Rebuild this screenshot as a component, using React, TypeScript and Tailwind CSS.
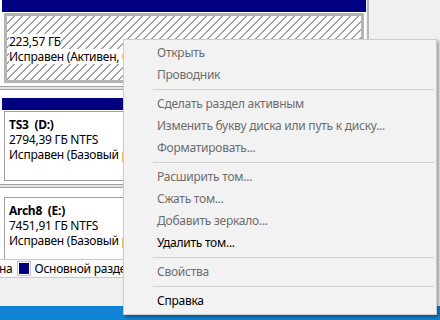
import React from 'react';

// Disk Management volume strip with the partition context menu open over it.

type Item = { label: string; enabled?: boolean } | 'sep';

const MENU: Item[] = [
  { label: 'Открыть' },
  { label: 'Проводник' },
  'sep',
  { label: 'Сделать раздел активным' },
  { label: 'Изменить букву диска или путь к диску...' },
  { label: 'Форматировать...' },
  'sep',
  { label: 'Расширить том...' },
  { label: 'Сжать том...' },
  { label: 'Добавить зеркало...' },
  { label: 'Удалить том...', enabled: true },
  'sep',
  { label: 'Свойства' },
  'sep',
  { label: 'Справка', enabled: true },
];

function DiskGap() {
  return (
    <div className="flex h-[14px] flex-col">
      <div className="h-[2px]" />
      <div className="h-[1px] bg-[#a0a0a0]" />
      <div className="h-[2px] bg-[#e3e3e3]" />
      <div className="h-[1px] bg-[#a0a0a0]" />
      <div className="flex-1 bg-white" />
    </div>
  );
}

function Partition({ lines, selected, clip }: { lines: React.ReactNode[]; selected?: boolean; clip?: boolean }) {
  return (
    <div className={clip ? 'flex flex-1 flex-col overflow-hidden pl-[2px]' : 'flex flex-col pl-[2px]'}>
      <div className="h-[12px] bg-[#000080]" />
      <div className={clip ? 'flex-1 px-[2px] pt-[1px]' : 'px-[2px] py-[1px]'}>
        <div
          className={
            selected
              ? 'h-[70px] border-[3px] border-[#b4b4b4] bg-[repeating-linear-gradient(135deg,#fff_0px,#fff_4.4px,#a4a4a4_4.4px,#a4a4a4_5.66px)] pl-[2px] pt-[3px]'
              : 'h-[70px] border border-[#a0a0a0] bg-white pl-[4px] pt-[5px]'
          }
        >
          {lines.map((l, i) => (
            <div key={i} className="h-[15px] leading-[15px]">
              {l && <span className="inline-block max-w-[114px] overflow-hidden whitespace-nowrap bg-white align-top">{l}</span>}
            </div>
          ))}
        </div>
      </div>
    </div>
  );
}

export default function App() {
  return (
    <div
      className="relative h-[320px] w-[440px] overflow-hidden bg-[#f0f0f0] text-[12px] tracking-[-0.25px] text-black"
      style={{ fontFamily: '"Noto Sans", "Open Sans", sans-serif' }}
    >
      <div className="flex h-full flex-col">
        <div className="flex h-[278px]">
          <div className="flex w-[366px] flex-col bg-white">
            <Partition selected lines={['', '223,57 ГБ', 'Исправен (Активен, Основной раздел)']} />
            <DiskGap />
            <Partition lines={[<b key="b">TS3&nbsp;&nbsp;(D:)</b>, '2794,39 ГБ NTFS', 'Исправен (Базовый раздел данных)']} />
            <DiskGap />
            <Partition clip lines={[<b key="b">Arch8&nbsp;&nbsp;(E:)</b>, '7451,91 ГБ NTFS', 'Исправен (Базовый раздел данных)']} />
            <div className="flex h-[19px] shrink-0 items-center gap-[5px] border-t border-b border-[#c8c8c8] bg-[#fafafa] whitespace-nowrap">
              <span className="-ml-[1px]">на</span>
              <span className="h-[13px] w-[12px] border border-white bg-[#000080] outline outline-[#c0c0c0]" />
              <span className="max-w-[88px] overflow-hidden">Основной раздел</span>
            </div>
          </div>
          <div className="w-[1px] bg-[#f0f0f0]" />
          <div className="flex-1 border-l-2 border-[#b8b8b8] bg-[#f0f0f0]" />
        </div>
        <div className="h-[28px] bg-[#f0f0f0]" />
        <div className="flex-1 bg-[#1083d4]" />
      </div>

      <div className="absolute left-[123px] top-[39px] w-[314px] border border-[#cccccc] bg-[#f2f2f2] py-[2px] shadow-[2px_2px_3px_rgba(0,0,0,0.35)]">
        {MENU.map((it, i) =>
          it === 'sep' ? (
            <div key={i} className="flex h-[7px] items-center pl-[29px] pr-[2px]">
              <div className="h-[1px] flex-1 bg-[#d0d0d0]" />
            </div>
          ) : (
            <div
              key={i}
              className={`flex h-[22px] items-center whitespace-nowrap pl-[33px] ${it.enabled ? 'text-black' : 'text-[#6d6d6d]'}`}
            >
              {it.label}
            </div>
          ),
        )}
      </div>
    </div>
  );
}
